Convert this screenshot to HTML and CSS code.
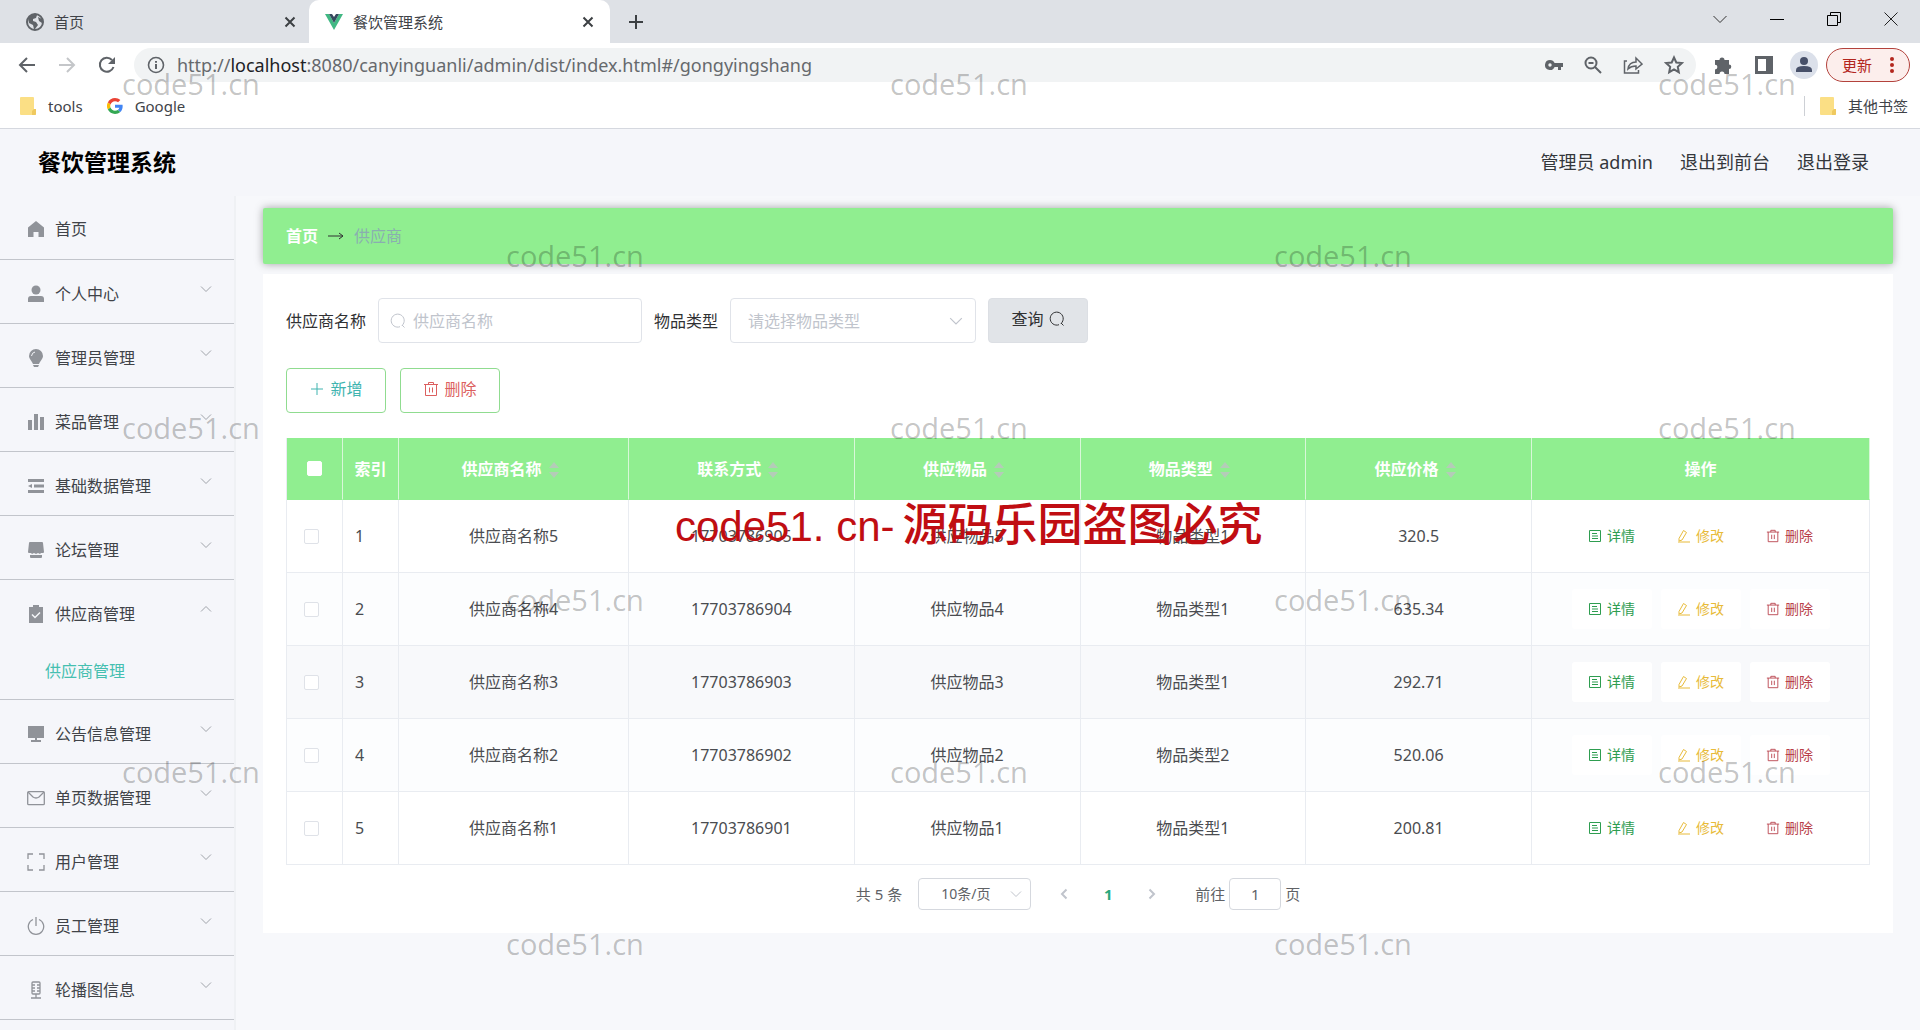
FILE: index.html
```html
<!DOCTYPE html>
<html lang="zh-CN">
<head>
<meta charset="utf-8">
<title>餐饮管理系统</title>
<link rel="stylesheet" href="styles.css">
</head>
<body>
<svg class="sprite" aria-hidden="true">
  <symbol id="i-down" viewBox="0 0 12 12"><path d="M1 3.500l5 5 5-5" fill="none" stroke="currentColor"/></symbol>
  <symbol id="i-up" viewBox="0 0 12 12"><path d="M1 8.500l5-5 5 5" fill="none" stroke="currentColor"/></symbol>
  <symbol id="i-search" viewBox="0 0 16 16"><path d="M12 12.500A6.500 6.500 0 1 0 10 13.700M12 12l2.500 2.500" fill="none" stroke="currentColor"/></symbol>
  <symbol id="i-trash" viewBox="0 0 16 16"><path d="M1 3.500h14M5.500 3.500v-2h5v2M2.500 3.500v11h11v-11M6.500 6.500v5M9.500 6.500v5" fill="none" stroke="currentColor"/></symbol>
  <symbol id="i-doc" viewBox="0 0 12 14"><path d="M.5 1.500h11v11H.5zM3 4.500h5M3 7h6M3 9.500h6" fill="none" stroke="currentColor"/></symbol>
  <symbol id="i-edit" viewBox="0 0 12 14"><path d="M1 9.500L5.500 1.500l3 2L4 11l-3 1zM0 13h12" fill="none" stroke="currentColor"/></symbol>
  <symbol id="i-close" viewBox="0 0 12 12"><path d="M1.500 1.500l9 9M10.500 1.500l-9 9" fill="none" stroke="currentColor" stroke-width="2"/></symbol>
  <symbol id="i-folder" viewBox="0 0 16 18"><path d="M1 0h12q1 0 1 1v11h2v5q0 1-1 1H1q-1 0-1-1V1q0-1 1-1z" fill="#fbdf85"/><path d="M12 14l2-2h2v5q0 1-1 1h-3z" fill="#efc95f"/></symbol>
</svg>

<div class="browser">
  <div class="tabs">
    <div class="tab">
      <svg class="fav" viewBox="0 0 18 18"><circle cx="9" cy="9" r="8" fill="none" stroke="#5f6368" stroke-width="2"/><path d="M2 5l4-4 5 1-1 3-3 1v2l3 1 2 3-3 4H8l-1-4-4-2zM12 4l4 2v4l-3-2z" fill="#5f6368"/></svg>
      <span class="tab-title">首页</span>
      <button class="icon-btn" aria-label="关闭"><svg class="s12"><use href="#i-close"/></svg></button>
    </div>
    <div class="tab active">
      <svg class="fav" viewBox="0 0 18 18"><path d="M0 1h4l5 9 5-9h4L9 17z" fill="#41b883"/><path d="M4 1h3l2 3 2-3h3L9 10z" fill="#35495e"/></svg>
      <span class="tab-title">餐饮管理系统</span>
      <button class="icon-btn" aria-label="关闭"><svg class="s12"><use href="#i-close"/></svg></button>
    </div>
    <button class="icon-btn new-tab" aria-label="新标签页"><svg class="s16" viewBox="0 0 16 16"><path d="M8 1v14M1 8h14" stroke="currentColor" stroke-width="2"/></svg></button>
    <div class="window-btns">
      <button class="icon-btn" aria-label="搜索标签页"><svg class="s14" viewBox="0 0 14 14"><path d="M.5 4L7 10.500 13.500 4" fill="none" stroke="#333"/></svg></button>
      <button class="icon-btn" aria-label="最小化"><svg class="s14" viewBox="0 0 14 14"><path d="M0 7.500h14" stroke="#000"/></svg></button>
      <button class="icon-btn" aria-label="还原"><svg class="s14" viewBox="0 0 14 14"><path d="M.5 3.500h10v10H.5zM3.500 3V.5h10v10H11" fill="none" stroke="#000"/></svg></button>
      <button class="icon-btn" aria-label="关闭窗口"><svg class="s14" viewBox="0 0 14 14"><path d="M.5 .5l13 13M13.500 .5l-13 13" stroke="#222"/></svg></button>
    </div>
  </div>
  <div class="toolbar">
    <div class="nav-btns">
      <button class="icon-btn" aria-label="后退"><svg class="s18" viewBox="0 0 18 18"><path d="M17 9H2M9 2L2 9l7 7" fill="none" stroke="#5f6368" stroke-width="2"/></svg></button>
      <button class="icon-btn" aria-label="前进"><svg class="s18" viewBox="0 0 18 18"><path d="M1 9h15M9 2l7 7-7 7" fill="none" stroke="#c4c6c9" stroke-width="2"/></svg></button>
      <button class="icon-btn" aria-label="刷新"><svg class="s18" viewBox="0 0 18 18"><path d="M15.500 11A7 7 0 1 1 14 4" fill="none" stroke="#5f6368" stroke-width="2"/><path d="M17 1v7h-7z" fill="#5f6368"/></svg></button>
    </div>
    <div class="omnibox">
      <svg class="s18" viewBox="0 0 18 18"><circle cx="9" cy="9" r="7.500" fill="none" stroke="#5f6368" stroke-width="1.600"/><path d="M9 8v5M9 5v1.800" stroke="#5f6368" stroke-width="2"/></svg>
      <div class="url" role="textbox" contenteditable="true" spellcheck="false" aria-label="地址">http://<span class="host">localhost</span>:8080/canyinguanli/admin/dist/index.html#/gongyingshang</div>
      <div class="omni-btns">
        <button class="icon-btn" aria-label="密码"><svg class="s18" viewBox="0 0 18 18"><path d="M5 4a5 5 0 1 0 4.600 7H13v3h3v-3h2V7H9.600A5 5 0 0 0 5 4zm0 3.300a1.700 1.700 0 1 1 0 3.400 1.700 1.700 0 0 1 0-3.400z" fill="#5f6368"/></svg></button>
        <button class="icon-btn" aria-label="缩放"><svg class="s18" viewBox="0 0 18 18"><circle cx="7" cy="7" r="5.500" fill="none" stroke="#5f6368" stroke-width="2"/><path d="M11 11l6 6M4.500 7h5" stroke="#5f6368" stroke-width="2"/></svg></button>
        <button class="icon-btn" aria-label="分享"><svg class="s20" viewBox="0 0 20 20"><path d="M4 6H1.500v12h14v-3M5 14q1-7 8-7V3l6 6-6 5v-3q-5 0-8 3z" fill="none" stroke="#5f6368" stroke-width="1.500"/></svg></button>
        <button class="icon-btn" aria-label="收藏"><svg class="s20" viewBox="0 0 20 20"><path d="M10 2.500l2.300 5 5.500.6-4 3.700 1 5.400L10 14.400l-4.800 2.800 1-5.400-4-3.700 5.500-.6z" fill="none" stroke="#5f6368" stroke-width="2"/></svg></button>
      </div>
    </div>
    <div class="ext-btns">
      <button class="icon-btn" aria-label="扩展程序"><svg class="s18" viewBox="0 0 18 18"><path d="M1 4h4.500a2.500 2.500 0 1 1 5 0H15v4.500a2.300 2.300 0 1 1 0 4.600V18h-4.500a2.500 2.500 0 0 0-5 0H1v-4.500a2.400 2.400 0 0 0 0-4.800z" fill="#5f6368"/></svg></button>
      <button class="icon-btn" aria-label="侧边栏"><svg class="s18" viewBox="0 0 18 18"><path d="M0 0h18v18H0zm3 3v12h8V3z" fill="#5f6368" fill-rule="evenodd"/></svg></button>
      <button class="icon-btn avatar" aria-label="用户"><svg class="s18" viewBox="0 0 18 18"><circle cx="9" cy="5" r="4" fill="#475069"/><path d="M1 16v-2q0-4 8-4t8 4v2z" fill="#475069"/></svg></button>
      <button class="update">更新<svg class="dots" viewBox="0 0 4 18"><circle cx="2" cy="3" r="2"/><circle cx="2" cy="9" r="2"/><circle cx="2" cy="15" r="2"/></svg></button>
    </div>
  </div>
  <div class="bookmarks">
    <a href="#"><svg class="folder"><use href="#i-folder"/></svg>tools</a>
    <a href="#"><svg class="s16" viewBox="0 0 48 48"><path fill="#ea4335" d="M24 9.500c3.500 0 6.700 1.200 9.200 3.600l6.900-6.900C35.900 2.400 30.500 0 24 0 14.600 0 6.500 5.400 2.600 13.200l8 6.200C12.400 13.700 17.700 9.500 24 9.500z"/><path fill="#4285f4" d="M47 24.500c0-1.600-.2-3.100-.4-4.500H24v9h12.900c-.6 3-2.200 5.500-4.700 7.200l7.700 6C44.400 38 47 31.800 47 24.500z"/><path fill="#fbbc05" d="M10.500 28.600a14.500 14.500 0 0 1 0-9.200l-8-6.200a24 24 0 0 0 0 21.600z"/><path fill="#34a853" d="M24 48c6.500 0 11.900-2.100 15.900-5.800l-7.700-6c-2.200 1.500-4.900 2.300-8.200 2.300-6.300 0-11.600-4.200-13.500-9.900l-8 6.200C6.500 42.600 14.600 48 24 48z"/></svg>Google</a>
    <a class="other" href="#"><svg class="folder"><use href="#i-folder"/></svg>其他书签</a>
  </div>
</div>

<header class="app-header">
  <h1>餐饮管理系统</h1>
  <nav class="user-nav">
    <span>管理员 admin</span>
    <a href="#">退出到前台</a>
    <a href="#">退出登录</a>
  </nav>
</header>

<div class="app-body">
  <aside class="sidebar">
    <ul class="menu">
      <li class="home"><a class="item" href="#"><svg class="mi" viewBox="0 0 18 18"><path d="M9 1l8 6.500V17h-5.500v-5h-5v5H1V7.500z"/></svg>首页</a></li>
      <li><a class="item" href="#"><svg class="mi" viewBox="0 0 18 18"><circle cx="9" cy="5" r="4.500"/><path d="M1 17v-3q0-3 3-3h10q3 0 3 3v3z"/></svg>个人中心<svg class="arrow"><use href="#i-down"/></svg></a></li>
      <li><a class="item" href="#"><svg class="mi" viewBox="0 0 18 18"><path d="M9 0a7 7 0 0 1 7 7c0 3-3 5-4 8H6C5 12 2 10 2 7a7 7 0 0 1 7-7zM6 16h6l-1 2H7z"/><path d="M4.500 7Q5 3.500 8 3" fill="none" stroke="#f5f6fa"/></svg>管理员管理<svg class="arrow"><use href="#i-down"/></svg></a></li>
      <li><a class="item" href="#"><svg class="mi" viewBox="0 0 18 18"><path d="M1 7h4v10H1zM7 1h4v16H7zM13 4h4v13h-4z"/></svg>菜品管理<svg class="arrow"><use href="#i-down"/></svg></a></li>
      <li><a class="item" href="#"><svg class="mi" viewBox="0 0 18 18"><path d="M1 2h16v3H1zM7 7.500h10v3H7zM1 13h16v3H1zM1 9l4-2v4z"/></svg>基础数据管理<svg class="arrow"><use href="#i-down"/></svg></a></li>
      <li><a class="item" href="#"><svg class="mi" viewBox="0 0 18 18"><path d="M3 1h12q1 0 1 1l1 9q0 1-1 1h-2l-1 1-2-1-2 1-2-1-2 1-1-1H2q-1 0-1-1l1-9q0-1 1-1zM3 14h12v2q0 1-1 1H4q-1 0-1-1z"/></svg>论坛管理<svg class="arrow"><use href="#i-down"/></svg></a></li>
      <li class="open"><a class="item" href="#"><svg class="mi" viewBox="0 0 18 18"><path d="M2 2h4V0h6v2h4v16H2z"/><path d="M5 9.500l3 3 5-5" fill="none" stroke="#f5f6fa" stroke-width="1.500"/></svg>供应商管理<svg class="arrow"><use href="#i-up"/></svg></a>
        <a class="sub" href="#">供应商管理</a></li>
      <li><a class="item" href="#"><svg class="mi" viewBox="0 0 18 18"><path d="M1 1h16v12H1zM8 13h2v2h4v2H4v-2h4z"/></svg>公告信息管理<svg class="arrow"><use href="#i-down"/></svg></a></li>
      <li><a class="item" href="#"><svg class="mi line" viewBox="0 0 18 18"><rect x=".7" y="2.700" width="16.600" height="13" rx="1"/><path d="M1 3l5 5q3 2 6 0l5-5"/></svg>单页数据管理<svg class="arrow"><use href="#i-down"/></svg></a></li>
      <li><a class="item" href="#"><svg class="mi line" viewBox="0 0 18 18"><path d="M1 6V1h5M12 1h5v5M17 12v5h-5M6 17H1v-5"/></svg>用户管理<svg class="arrow"><use href="#i-down"/></svg></a></li>
      <li><a class="item" href="#"><svg class="mi line" viewBox="0 0 18 18"><path d="M9 0v9M6 2.500a7.700 7.700 0 1 0 6 0"/></svg>员工管理<svg class="arrow"><use href="#i-down"/></svg></a></li>
      <li><a class="item" href="#"><svg class="mi line" viewBox="0 0 18 18"><path d="M6 1h6q1 0 1 1v10q0 1-1 1H6q-1 0-1-1V2q0-1 1-1zM5 4h3M5 7h3M5 10h3M10 4h3M10 7h3M10 10h3M9 13v4M4 17h10"/></svg>轮播图信息<svg class="arrow"><use href="#i-down"/></svg></a></li>
    </ul>
  </aside>

  <main class="content">
    <nav class="crumb" aria-label="面包屑">
      <a href="#">首页</a>
      <svg class="crumb-arrow" viewBox="0 0 16 8"><path d="M0 4h15M11 1l4 3-4 3" fill="none" stroke="#303133"/></svg>
      <span>供应商</span>
    </nav>

    <section class="card">
      <form class="filters">
        <label for="name">供应商名称</label>
        <div class="field">
          <svg class="s16"><use href="#i-search"/></svg>
          <input id="name" type="text" placeholder="供应商名称">
        </div>
        <label for="type">物品类型</label>
        <div class="picker">
          <select id="type"><option>请选择物品类型</option><option>物品类型1</option><option>物品类型2</option></select>
          <svg class="s14"><use href="#i-down"/></svg>
        </div>
        <button class="btn query" type="button">查询<svg class="s16"><use href="#i-search"/></svg></button>
      </form>
      <div class="actions">
        <button class="btn add"><svg class="s16" viewBox="0 0 16 16"><path d="M8 2v12M2 8h12" stroke="currentColor"/></svg>新增</button>
        <button class="btn del"><svg class="s16"><use href="#i-trash"/></svg>删除</button>
      </div>

      <table>
        <colgroup><col class="c-check"><col class="c-index"><col class="c-name"><col><col><col><col><col class="c-ops"></colgroup>
        <thead>
          <tr>
            <th><input type="checkbox" aria-label="全选"></th>
            <th>索引</th>
            <th>供应商名称<svg class="sort" viewBox="0 0 24 16"><path d="M12 0l5 6H7zM12 16l5-6H7z"/></svg></th>
            <th>联系方式<svg class="sort" viewBox="0 0 24 16"><path d="M12 0l5 6H7zM12 16l5-6H7z"/></svg></th>
            <th>供应物品<svg class="sort" viewBox="0 0 24 16"><path d="M12 0l5 6H7zM12 16l5-6H7z"/></svg></th>
            <th>物品类型<svg class="sort" viewBox="0 0 24 16"><path d="M12 0l5 6H7zM12 16l5-6H7z"/></svg></th>
            <th>供应价格<svg class="sort" viewBox="0 0 24 16"><path d="M12 0l5 6H7zM12 16l5-6H7z"/></svg></th>
            <th>操作</th>
          </tr>
        </thead>
        <tbody>
          <tr><td><input type="checkbox" aria-label="选择第1行"></td><td>1</td><td>供应商名称5</td><td>17703786905</td><td>供应物品5</td><td>物品类型1</td><td>320.5</td>
            <td><div class="ops"><button class="op view"><svg><use href="#i-doc"/></svg>详情</button><button class="op edit"><svg><use href="#i-edit"/></svg>修改</button><button class="op remove"><svg><use href="#i-trash"/></svg>删除</button></div></td></tr>
          <tr class="alt"><td><input type="checkbox" aria-label="选择第2行"></td><td>2</td><td>供应商名称4</td><td>17703786904</td><td>供应物品4</td><td>物品类型1</td><td>635.34</td>
            <td><div class="ops"><button class="op view"><svg><use href="#i-doc"/></svg>详情</button><button class="op edit"><svg><use href="#i-edit"/></svg>修改</button><button class="op remove"><svg><use href="#i-trash"/></svg>删除</button></div></td></tr>
          <tr class="hover"><td><input type="checkbox" aria-label="选择第3行"></td><td>3</td><td>供应商名称3</td><td>17703786903</td><td>供应物品3</td><td>物品类型1</td><td>292.71</td>
            <td><div class="ops"><button class="op view"><svg><use href="#i-doc"/></svg>详情</button><button class="op edit"><svg><use href="#i-edit"/></svg>修改</button><button class="op remove"><svg><use href="#i-trash"/></svg>删除</button></div></td></tr>
          <tr class="alt"><td><input type="checkbox" aria-label="选择第4行"></td><td>4</td><td>供应商名称2</td><td>17703786902</td><td>供应物品2</td><td>物品类型2</td><td>520.06</td>
            <td><div class="ops"><button class="op view"><svg><use href="#i-doc"/></svg>详情</button><button class="op edit"><svg><use href="#i-edit"/></svg>修改</button><button class="op remove"><svg><use href="#i-trash"/></svg>删除</button></div></td></tr>
          <tr><td><input type="checkbox" aria-label="选择第5行"></td><td>5</td><td>供应商名称1</td><td>17703786901</td><td>供应物品1</td><td>物品类型1</td><td>200.81</td>
            <td><div class="ops"><button class="op view"><svg><use href="#i-doc"/></svg>详情</button><button class="op edit"><svg><use href="#i-edit"/></svg>修改</button><button class="op remove"><svg><use href="#i-trash"/></svg>删除</button></div></td></tr>
        </tbody>
      </table>

      <div class="pager">
        <span>共 5 条</span>
        <div class="picker size">
          <select aria-label="每页条数"><option>10条/页</option><option>20条/页</option></select>
          <svg class="s12"><use href="#i-down"/></svg>
        </div>
        <div class="pages">
          <button aria-label="上一页"><svg class="s12" viewBox="0 0 12 12"><path d="M8.500 1.500L4 6l4.500 4.500" fill="none" stroke="#c0c4cc" stroke-width="2"/></svg></button>
          <button class="current">1</button>
          <button aria-label="下一页"><svg class="s12" viewBox="0 0 12 12"><path d="M3.500 1.500L8 6l-4.500 4.500" fill="none" stroke="#c0c4cc" stroke-width="2"/></svg></button>
        </div>
        <label class="jump">前往<input type="text" value="1">页</label>
      </div>
    </section>
  </main>
</div>

<div class="watermarks" aria-hidden="true">
  <div class="wm-row"><span>code51.cn</span><span>code51.cn</span><span>code51.cn</span></div>
  <div class="wm-row odd"><span>code51.cn</span><span>code51.cn</span></div>
  <div class="wm-row"><span>code51.cn</span><span>code51.cn</span><span>code51.cn</span></div>
  <div class="wm-row odd"><span>code51.cn</span><span>code51.cn</span></div>
  <div class="wm-row"><span>code51.cn</span><span>code51.cn</span><span>code51.cn</span></div>
  <div class="wm-row odd"><span>code51.cn</span><span>code51.cn</span></div>
</div>
<div class="notice"><span class="latin">code51. cn-</span>源码乐园盗图必究</div>
</body>
</html>
```

FILE: styles.css
```css
* { box-sizing: border-box; }

body {
  margin: 0;
  min-height: 100vh;
  display: flex;
  flex-direction: column;
  font: 16px/24px "Noto Sans", "Noto Sans CJK SC", sans-serif;
  color: #404348;
  background: #f7f8fb;
  position: relative;
  overflow-x: hidden;
}

a { color: inherit; text-decoration: none; }
button, input, select { font: inherit; color: inherit; }
button { padding: 0; border: 0; background: none; cursor: pointer; }
svg { display: block; flex: none; }
.sprite { position: absolute; width: 0; height: 0; }

.s12 { width: 12px; height: 12px; }
.s14 { width: 14px; height: 14px; }
.s16 { width: 16px; height: 16px; }
.s18 { width: 18px; height: 18px; }
.s20 { width: 20px; height: 20px; }

/* browser frame */
.browser { background: #fff; border-bottom: 1px solid #d5d8df; }
.icon-btn { display: grid; place-items: center; color: #3c4043; }
.tabs { display: flex; height: 43px; background: #dee1e6; }
.tab {
  display: flex;
  align-items: center;
  gap: 10px;
  width: 309px;
  padding: 0 13px 0 26px;
  font-size: 15px;
}
.tab.active {
  width: 301px;
  padding: 0 16px;
  background: #fff;
  border-radius: 10px 10px 0 0;
}
.tab .icon-btn { margin-left: auto; }
.fav { width: 18px; height: 18px; }
.new-tab { margin-left: 18px; }
.window-btns { display: flex; gap: 43px; margin-left: auto; padding: 0 22px 6px 0; }

.toolbar { display: flex; align-items: center; height: 43px; padding: 1px 10px 0 18px; }
.nav-btns { display: flex; gap: 22px; margin-right: 18px; }
.omnibox {
  flex: 1;
  display: flex;
  align-items: center;
  gap: 12px;
  height: 34px;
  padding: 0 12px 0 13px;
  border-radius: 17px;
  background: #f1f3f4;
}
.url { flex: 1; font-size: 18px; color: #66696d; outline: 0; white-space: nowrap; }
.host { color: #202124; }
.omni-btns { display: flex; gap: 21px; }
.ext-btns { display: flex; align-items: center; gap: 23px; margin-left: 18px; }
.avatar { width: 28px; height: 28px; margin: 0 -6px; border-radius: 50%; background: #dbe0ea; }
.update {
  display: flex;
  align-items: center;
  gap: 18px;
  height: 34px;
  margin-left: -9px;
  padding: 0 15px;
  border: 1px solid #b3423c;
  border-radius: 17px;
  background: #fceeec;
  color: #b3261e;
  font-size: 15px;
}
.dots { width: 4px; height: 18px; fill: #b3261e; }

.bookmarks { display: flex; align-items: center; gap: 24px; height: 42px; padding: 0 12px 2px 20px; font-size: 15px; }
.bookmarks a { display: flex; align-items: center; gap: 12px; }
.folder { width: 16px; height: 18px; }
.bookmarks .other { margin-left: auto; padding-left: 15px; border-left: 1px solid #cdd0d5; height: 20px; }

/* application header */
.app-header {
  display: flex;
  align-items: center;
  justify-content: space-between;
  height: 67px;
  padding: 0 51px 2px 38px;
  background: #f5f6fa;
}
.app-header h1 { margin: 0; font-size: 23px; line-height: 32px; color: #000; }
.user-nav { display: flex; gap: 27px; font-size: 18px; color: #33363b; }

.app-body { flex: 1; display: flex; }

/* sidebar */
.sidebar { flex: none; width: 236px; background: #f5f6fa; border-right: 2px solid #eff1f4; }
.menu { margin: 0; padding: 0; list-style: none; }
.menu li { border-bottom: 1px solid #c2c5cb; }
.item { display: flex; align-items: center; height: 63px; padding: 4px 22px 0 27px; }
.home .item { padding-top: 2px; }
.mi { width: 18px; height: 18px; margin-right: 10px; fill: #909399; color: #909399; }
.mi.line { fill: none; stroke: #909399; stroke-width: 1.3; }
.arrow { width: 12px; height: 12px; margin: 0 0 10px auto; color: #a0a4aa; }
.sub { display: flex; align-items: center; height: 56px; padding-left: 45px; color: #45bfb0; }

/* content */
.content { flex: 1; min-width: 0; padding: 12px 27px 32px; }
.crumb {
  display: flex;
  align-items: center;
  gap: 10px;
  height: 56px;
  padding: 0 23px;
  border-radius: 2px;
  background: #90ee90;
  box-shadow: 0 0 8px rgba(0, 0, 0, .35);
  color: #8aaeb0;
}
.crumb a { color: #fff; font-weight: 700; }
.crumb-arrow { width: 16px; height: 8px; }

.card { margin-top: 10px; padding: 24px 23px 22px; background: #fff; }
.filters { display: flex; align-items: center; gap: 12px; color: #303133; }
.field, .picker {
  display: flex;
  align-items: center;
  height: 45px;
  border: 1px solid #e0e3e9;
  border-radius: 4px;
  color: #c0c4cc;
}
.field { width: 264px; padding: 0 11px; gap: 7px; }
.field input { flex: 1; min-width: 0; padding: 0; border: 0; outline: 0; background: none; }
.field input::placeholder { color: #c0c4cc; }
.picker { width: 246px; padding: 0 12px 0 17px; }
.picker select { flex: 1; min-width: 0; padding: 0; border: 0; outline: 0; background: none; appearance: none; }
.btn {
  display: flex;
  align-items: center;
  justify-content: center;
  gap: 5px;
  width: 100px;
  height: 45px;
  padding-bottom: 3px;
  border: 1px solid #90dc90;
  border-radius: 4px;
  background: #fff;
}
.query { border-color: #dcdfe4; background: #e1e4e8; }
.add { color: #40b4b0; }
.del { color: #dc5f5f; }
.actions { display: flex; gap: 14px; margin: 25px 0; }

table { width: 100%; border-collapse: separate; border-spacing: 0; table-layout: fixed; border-left: 1px solid #e9ecf1; }
.c-check, .c-index { width: 56px; }
.c-name { width: 230px; }
.c-ops { width: 338px; }
th, td { padding: 0; border-right: 1px solid #e9ecf1; border-bottom: 1px solid #e9ecf1; text-align: center; vertical-align: middle; }
th { height: 62px; background: #90ee90; color: #fff; border-bottom-color: #90ee90; border-right-color: #d9f7d9; }
td { height: 73px; color: #4a4c50; }
td:nth-child(1) { padding-right: 6px; }
td:nth-child(2) { padding-left: 12px; text-align: left; }
.alt td { background: #fcfdfe; }
.hover td { background: #f8f9fb; }
th input, td input {
  display: block;
  width: 15px;
  height: 15px;
  margin: 0 auto;
  appearance: none;
  background: #fff;
  border: 1px solid #dfe2e8;
  border-radius: 2px;
}
th input { border-color: #fff; }
.sort { display: inline-block; width: 24px; height: 16px; fill: #b4ccb8; vertical-align: middle; }

.ops { display: flex; justify-content: center; gap: 9px; }
.op { display: flex; align-items: center; justify-content: center; gap: 5px; width: 80px; height: 40px; border-radius: 3px; background: #fff; font-size: 14px; }
.op svg { width: 14px; height: 14px; }
.view { color: #2e9d50; }
.edit { color: #e8bb3a; }
.remove { color: #b8404a; }

/* pagination */
.pager { display: flex; align-items: center; justify-content: center; height: 46px; padding-top: 12px; font-size: 15px; color: #606266; }
.size { width: 113px; height: 32px; margin: 0 0 0 16px; padding: 0 8px 0 22px; font-size: 14px; border-color: #d5d8de; }
.size select { color: #606266; }
.pages { display: flex; margin: 0 21px 0 11px; }
.pages button { display: grid; place-items: center; width: 44px; height: 32px; }
.pages .current { color: #29a77c; font-weight: 700; }
.jump { display: flex; align-items: center; gap: 4px; }
.jump input { width: 52px; height: 32px; padding: 0; border: 1px solid #d5d8de; border-radius: 4px; text-align: center; }

/* overlays */
.watermarks { position: absolute; inset: 64px 0 0; pointer-events: none; overflow: hidden; }
.wm-row { display: flex; height: 172px; padding-left: 122px; font: 29px/40px "Open Sans", sans-serif; color: rgba(0, 0, 0, .24); }
.wm-row.odd { padding-left: 506px; }
.wm-row span { flex: none; width: 768px; }
.notice {
  position: absolute;
  top: 491px;
  left: 675px;
  font: 500 45px/62px "Noto Sans CJK SC", sans-serif;
  color: #c00d12;
  pointer-events: none;
  white-space: nowrap;
}
.notice .latin { margin-right: 8px; font-family: "Liberation Sans", sans-serif; font-size: 42px; }
```
